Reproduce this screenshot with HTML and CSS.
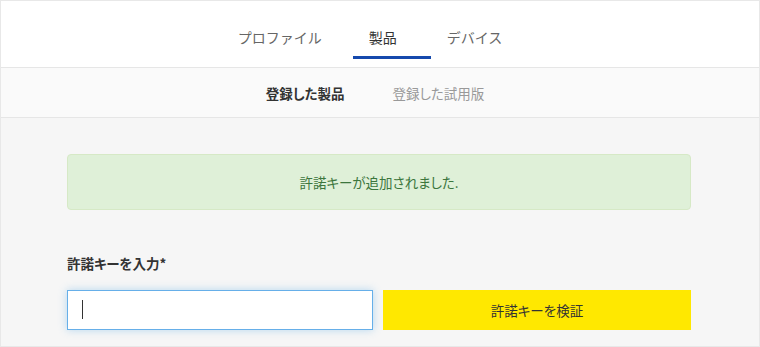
FILE: index.html
```html
<!DOCTYPE html>
<html lang="ja">
<head>
<meta charset="utf-8">
<link rel="stylesheet" href="styles.css">
</head>
<body>
<div class="frame">
  <nav class="topnav">
    <a class="tab tab-first">プロファイル</a>
    <a class="tab tab-active">製品</a>
    <a class="tab">デバイス</a>
  </nav>
  <nav class="subnav">
    <a class="sub sub-active">登録した製品</a>
    <a class="sub">登録した試用版</a>
  </nav>
  <main class="main">
    <div class="alert">許諾キーが追加されました.</div>
    <label class="label" for="key">許諾キーを入力*</label>
    <div class="row">
      <div class="field">
        <input id="key" class="input" type="text">
        <span class="caret"></span>
      </div>
      <button class="btn" type="button">許諾キーを検証</button>
    </div>
  </main>
</div>
</body>
</html>
```

FILE: styles.css
```css
* { box-sizing: border-box; }
html, body { margin: 0; padding: 0; }
body {
  font-family: "Noto Sans CJK JP", "Noto Sans", sans-serif;
  font-feature-settings: "palt";
  color: #333;
}
.frame {
  width: 760px;
  height: 347px;
  border: 1px solid #e8e8e8;
  background: #f6f6f6;
  overflow: hidden;
  display: flex;
  flex-direction: column;
}
.topnav {
  height: 67px;
  flex: none;
  background: #fff;
  border-bottom: 1px solid #e6e6e6;
  display: flex;
  align-items: flex-start;
  justify-content: center;
  padding-right: 20px;
}
.tab {
  display: flex;
  align-items: center;
  height: 58px;
  padding: 16px 16px 0;
  font-size: 14px;
  font-feature-settings: normal;
  color: #666;
  border-bottom: 3px solid transparent;
}
.tab-first { margin-right: 15px; }
.tab-active {
  min-width: 78px;
  color: #333;
  border-bottom-color: #1549ad;
}
.subnav {
  height: 50px;
  flex: none;
  background: #fafafa;
  border-bottom: 1px solid #e6e6e6;
  display: flex;
  justify-content: center;
  align-items: center;
  gap: 48px;
  padding-right: 10px;
}
.sub {
  font-size: 13.5px;
  color: #999;
}
.sub-active {
  color: #333;
  font-weight: bold;
}
.main {
  padding: 36px 0 0 66px;
  display: flex;
  flex-direction: column;
  width: 690px;
}
.alert {
  height: 56px;
  background: #dff0d8;
  border: 1px solid #d6e9c6;
  border-radius: 4px;
  color: #3c763d;
  font-size: 13.5px;
  display: flex;
  align-items: center;
  justify-content: center;
}
.label {
  margin-top: 43px;
  font-size: 13.5px;
  font-weight: bold;
  color: #333;
  line-height: 20px;
}
.row {
  margin-top: 17px;
  display: flex;
  gap: 10px;
}
.field {
  position: relative;
  width: 306px;
  height: 40px;
}
.input {
  width: 100%;
  height: 100%;
  border: 1px solid #66afe9;
  box-shadow: 0 0 8px rgba(102, 175, 233, 0.45);
  outline: none;
  background: #fff;
  padding: 0 14px;
  font-size: 14px;
  caret-color: transparent;
}
.caret {
  position: absolute;
  left: 15px;
  top: 10px;
  width: 1px;
  height: 19px;
  background: #333;
}
.btn {
  width: 308px;
  height: 40px;
  border: none;
  background: #ffe800;
  color: #333;
  font-family: inherit;
  font-feature-settings: "palt";
  font-size: 13.5px;
  cursor: pointer;
}
```
